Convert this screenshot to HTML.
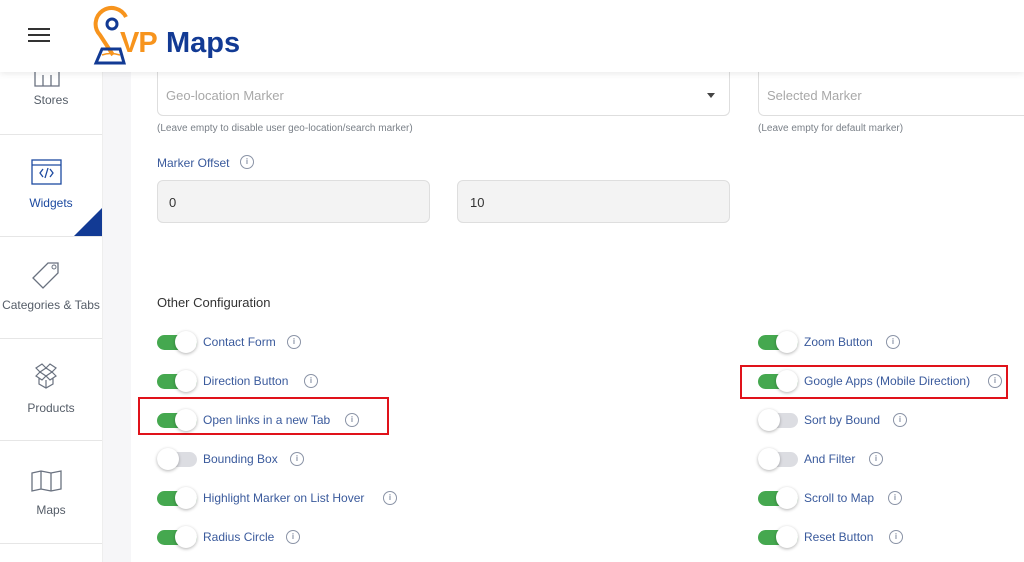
<!DOCTYPE html>
<html><head><meta charset="utf-8"><style>
*{box-sizing:border-box;margin:0;padding:0}
body{width:1024px;height:562px;overflow:hidden;background:#fff;font-family:"Liberation Sans",sans-serif;position:relative}
.abs{position:absolute}
.hdr{left:0;top:0;width:1024px;height:72px;background:#fff;box-shadow:0 2px 6px rgba(0,0,0,.08);z-index:5}
.side{left:0;top:72px;width:102px;height:490px;background:#fff}
.strip{left:102px;top:72px;width:29px;height:490px;background:#f6f6f8;border-left:1px solid #eee}
.sep{left:0;width:102px;height:1px;background:#e6e6e6}
.slab{width:102px;text-align:center;font-size:12px;color:#555d68}
.box{border:1px solid #dedede;border-radius:6px;background:#fff}
.ph{font-size:13px;color:#a8a8a8}
.help{font-size:10px;color:#7a8088}
.lbl{font-size:12px;color:#3a5a9c}
.tr{width:40px;height:15px;border-radius:8px}
.on{background:#45a84f}.off{background:#dcdde2}
.kn{width:22px;height:22px;border-radius:50%;background:#fff;box-shadow:0 1px 3px rgba(0,0,0,.3)}
.info{width:14px;height:14px;border:1px solid #8a93a6;border-radius:50%;font-size:8px;color:#8a93a6;text-align:center;line-height:12px;font-weight:bold}
.red{border:2px solid #e0121a}
</style></head><body>
<div class="abs hdr">
 <div class="abs" style="left:28px;top:28px;width:22px;height:2px;background:#333"></div>
 <div class="abs" style="left:28px;top:34px;width:22px;height:2px;background:#333"></div>
 <div class="abs" style="left:28px;top:40px;width:22px;height:2px;background:#333"></div>
 <svg class="abs" style="left:90px;top:5px" width="60" height="62" viewBox="0 0 60 62">
  <path d="M23 50 L10 30 A16 16 0 1 1 36 12" fill="none" stroke="#f7941d" stroke-width="4"/>
  <circle cx="22" cy="19" r="5" fill="none" stroke="#123a94" stroke-width="3"/>
  <path d="M6 58 L12 44 L30 44 L34 58 Z" fill="none" stroke="#123a94" stroke-width="3"/>
  <path d="M12 50 Q20 47 30 50" fill="none" stroke="#f7941d" stroke-width="1.5"/>
 </svg>
 <div class="abs" style="left:120px;top:27px;font-size:29px;font-weight:bold;color:#f7941d;letter-spacing:-1px">VP</div>
 <div class="abs" style="left:166px;top:27px;font-size:29px;font-weight:bold;color:#123a94">Maps</div>
</div>
<div class="abs side"></div>
<div class="abs strip"></div>
<svg class="abs" style="left:34px;top:72px" width="26" height="16"><path d="M1 0V14H25V0M9 3V14M17 3V14" fill="none" stroke="#6a7280" stroke-width="1.3"/></svg>
<div class="abs slab" style="top:93px">Stores</div>
<div class="abs sep" style="top:134px"></div>
<svg class="abs" style="left:31px;top:159px" width="31" height="26"><rect x="1" y="1" width="29" height="24" fill="none" stroke="#1d4aa0" stroke-width="1.3"/><path d="M1 6H30M12 10L9 14L12 18M19 10L22 14L19 18M17 9L14 19" fill="none" stroke="#1d4aa0" stroke-width="1.3"/></svg>
<div class="abs slab" style="top:196px;color:#1d4aa0">Widgets</div>
<div class="abs" style="left:74px;top:208px;width:0;height:0;border-left:28px solid transparent;border-bottom:28px solid #123a94"></div>
<div class="abs sep" style="top:236px"></div>
<svg class="abs" style="left:30px;top:260px" width="32" height="30"><path d="M3 18L18 3H28V13L13 28Z" fill="none" stroke="#6a7280" stroke-width="1.3"/><circle cx="24" cy="7" r="2" fill="none" stroke="#6a7280"/></svg>
<div class="abs slab" style="top:298px;left:-6px;width:114px">Categories &amp; Tabs</div>
<div class="abs sep" style="top:338px"></div>
<svg class="abs" style="left:32px;top:362px" width="28" height="28"><path d="M4 6L10 2L14 6L8 10ZM14 6L18 2L24 6L20 10ZM8 10L14 14L20 10M8 10L4 14L10 18L14 14L18 18L24 14L20 10M7 16V22L14 26L21 22V16M14 18V26" fill="none" stroke="#6a7280" stroke-width="1.2"/></svg>
<div class="abs slab" style="top:401px">Products</div>
<div class="abs sep" style="top:440px"></div>
<svg class="abs" style="left:31px;top:470px" width="32" height="22"><path d="M1 3L10 1L20 3L30 1V19L20 21L10 19L1 21ZM10 1V19M20 3V21" fill="none" stroke="#6a7280" stroke-width="1.3"/></svg>
<div class="abs slab" style="top:503px">Maps</div>
<div class="abs sep" style="top:543px"></div>

<div class="abs box" style="left:157px;top:72px;width:573px;height:44px;border-top:none;border-radius:0 0 6px 6px"></div>
<div class="abs ph" style="left:166px;top:88px">Geo-location Marker</div>
<div class="abs" style="left:707px;top:93px;border-left:4px solid transparent;border-right:4px solid transparent;border-top:5px solid #444"></div>
<div class="abs box" style="left:758px;top:72px;width:280px;height:44px;border-top:none;border-radius:0 0 6px 6px"></div>
<div class="abs ph" style="left:767px;top:88px">Selected Marker</div>
<div class="abs help" style="left:157px;top:123px">(Leave empty to disable user geo-location/search marker)</div>
<div class="abs help" style="left:758px;top:123px">(Leave empty for default marker)</div>
<div class="abs lbl" style="left:157px;top:156px">Marker Offset</div>
<div class="abs info" style="left:240px;top:155px">i</div>
<div class="abs box" style="left:157px;top:180px;width:273px;height:43px;background:#f3f3f3"></div>
<div class="abs" style="left:169px;top:195px;font-size:13px;color:#333">0</div>
<div class="abs box" style="left:457px;top:180px;width:273px;height:43px;background:#f3f3f3"></div>
<div class="abs" style="left:470px;top:195px;font-size:13px;color:#333">10</div>
<div class="abs" style="left:157px;top:295px;font-size:13px;color:#333">Other Configuration</div>

<div class="abs red" style="left:138px;top:397px;width:251px;height:38px"></div>
<div class="abs red" style="left:740px;top:365px;width:268px;height:34px"></div>

<div id="rows"></div>
<script>
var L=[["Contact Form",1,294],["Direction Button",1,311],["Open links in a new Tab",1,352],["Bounding Box",0,297],["Highlight Marker on List Hover",1,390],["Radius Circle",1,293]];
var R=[["Zoom Button",1,893],["Google Apps (Mobile Direction)",1,995],["Sort by Bound",0,900],["And Filter",0,876],["Scroll to Map",1,895],["Reset Button",1,896]];
var h="",ys=[342,381,420,459,498,537];
function row(x,lx,it,y){var on=it[1];
h+='<div class="abs tr '+(on?'on':'off')+'" style="left:'+x+'px;top:'+(y-7)+'px"></div>';
h+='<div class="abs kn" style="left:'+(on?x+18:x)+'px;top:'+(y-11)+'px"></div>';
h+='<div class="abs lbl" style="left:'+lx+'px;top:'+(y-7)+'px">'+it[0]+'</div>';
h+='<div class="abs info" style="left:'+(it[2]-7)+'px;top:'+(y-7)+'px">i</div>';}
for(var i=0;i<6;i++){row(157,203,L[i],ys[i]);row(758,804,R[i],ys[i]);}
document.getElementById("rows").innerHTML=h;
</script>
</body></html>
